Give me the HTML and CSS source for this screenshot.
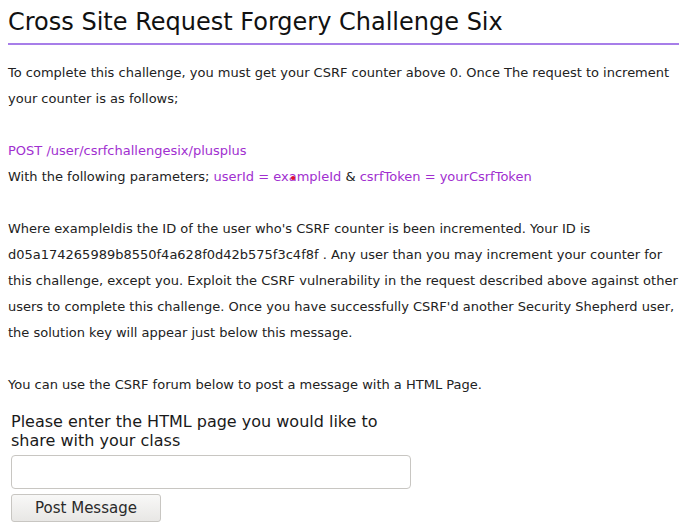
FILE: index.html
```html
<!DOCTYPE html>
<html>
<head>
<meta charset="utf-8">
<link rel="stylesheet" href="styles.css">
</head>
<body>
<div class="page">
  <h1 class="title">Cross Site Request Forgery Challenge Six</h1>
  <div class="content">
    <p class="para">To complete this challenge, you must get your CSRF counter above 0. Once The request to increment your counter is as follows;</p>
    <p class="para"><span class="hl">POST /user/csrfchallengesix/plusplus</span><br>With the following parameters; <span class="hl">userId = ex<span class="dotwrap">a<span class="dot"></span></span>mpleId</span> &amp; <span class="hl">csrfToken = yourCsrfToken</span></p>
    <p class="para">Where exampleIdis the ID of the user who's CSRF counter is been incremented. Your ID is d05a174265989b8550f4a628f0d42b575f3c4f8f . Any user than you may increment your counter for this challenge, except you. Exploit the CSRF vulnerability in the request described above against other users to complete this challenge. Once you have successfully CSRF'd another Security Shepherd user, the solution key will appear just below this message.</p>
    <p class="para">You can use the CSRF forum below to post a message with a HTML Page.</p>
  </div>
  <form class="form">
    <label class="label" for="msg">Please enter the HTML page you would like to share with your class</label>
    <input class="input" id="msg" type="text">
    <button class="btn" type="button">Post Message</button>
  </form>
</div>
</body>
</html>
```

FILE: styles.css
```css
html, body {
  margin: 0;
  padding: 0;
  background: #ffffff;
}
body {
  font-family: "DejaVu Sans", Verdana, sans-serif;
  color: #222222;
}
.page {
  padding: 8px 0 0 8px;
  width: 671px;
}
.title {
  margin: 0;
  font-size: 24px;
  font-weight: normal;
  line-height: 28px;
  color: #111111;
  padding-bottom: 7px;
  border-bottom: 2px solid #a77ee9;
}
.content {
  padding-top: 15px;
}
.para {
  margin: 0 0 26px 0;
  font-size: 13px;
  line-height: 26px;
}
.para:last-child {
  margin-bottom: 0;
}
.hl {
  color: #a12fd0;
}
.dotwrap {
  position: relative;
}
.dot {
  position: absolute;
  left: 2px;
  top: 7px;
  width: 4px;
  height: 4px;
  border-radius: 50%;
  background: #e0102a;
}
.form {
  display: flex;
  flex-direction: column;
  align-items: flex-start;
  padding: 14px 0 0 3px;
}
.label {
  width: 400px;
  font-size: 16px;
  line-height: 19px;
  color: #1a1a1a;
}
.input {
  box-sizing: border-box;
  width: 400px;
  height: 34px;
  margin-top: 5px;
  border: 1px solid #c8c6c2;
  border-radius: 4px;
  background: #ffffff;
  font-family: "DejaVu Sans", sans-serif;
}
.btn {
  box-sizing: border-box;
  width: 150px;
  height: 28px;
  margin-top: 5px;
  border: 1px solid #c8c6c2;
  border-radius: 3px;
  background: linear-gradient(#f8f8f7, #e8e7e5);
  font-family: "DejaVu Sans", sans-serif;
  font-size: 15px;
  color: #2a2a2a;
  padding: 0;
}
```
